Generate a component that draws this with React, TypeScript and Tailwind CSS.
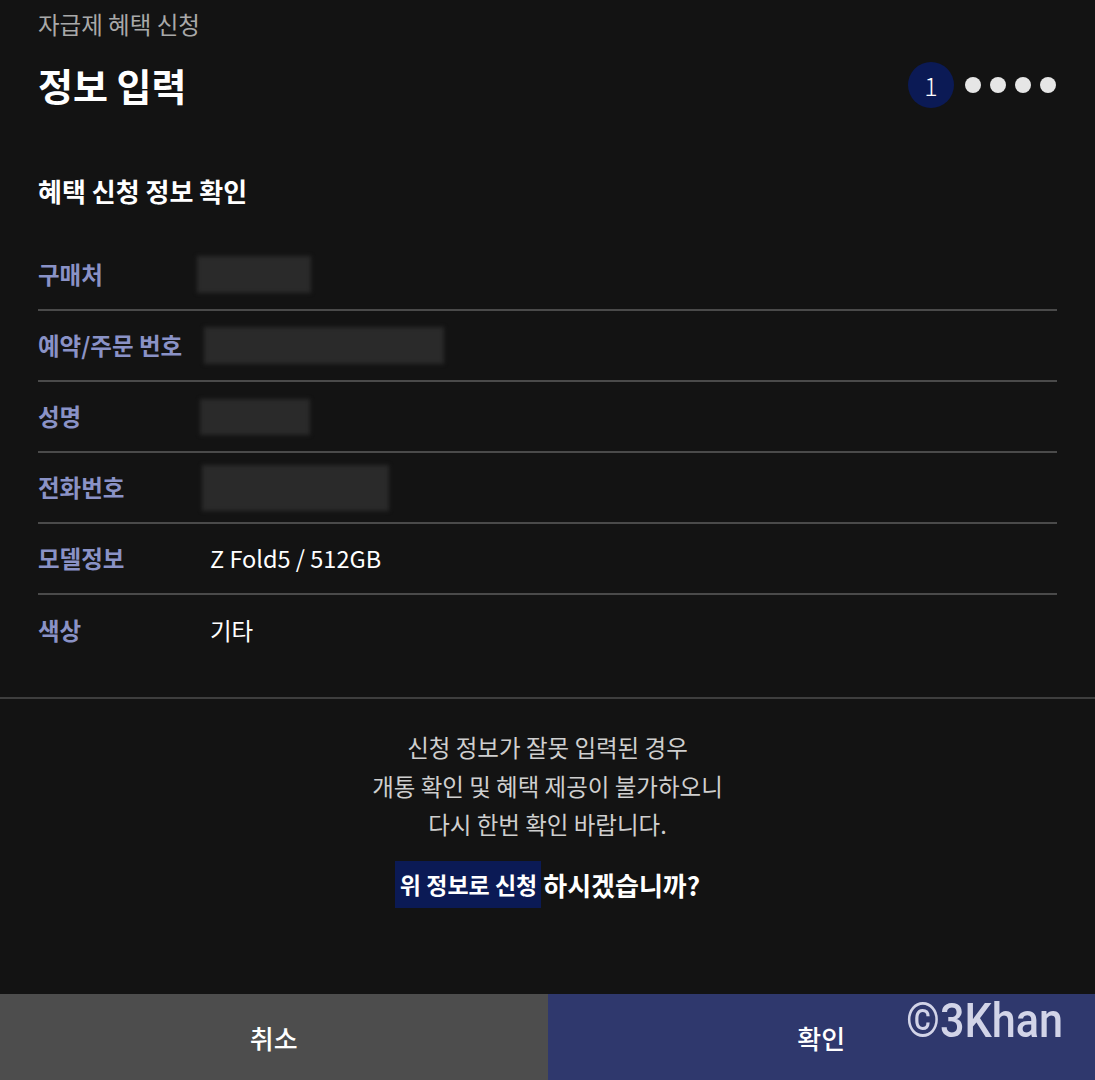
import React from 'react'

type Row = { label: string; value?: string; blur?: { ml: string; w: string; h: string } }

const rows: Row[] = [
  { label: '구매처', blur: { ml: 'ml-[-13px]', w: 'w-[114px]', h: 'h-[37px]' } },
  { label: '예약/주문 번호', blur: { ml: 'ml-[-6px]', w: 'w-[240px]', h: 'h-[37px]' } },
  { label: '성명', blur: { ml: 'ml-[-10px]', w: 'w-[110px]', h: 'h-[36px]' } },
  { label: '전화번호', blur: { ml: 'ml-[-8px]', w: 'w-[187px]', h: 'h-[46px]' } },
  { label: '모델정보', value: 'Z Fold5 / 512GB' },
  { label: '색상', value: '기타' },
]

export default function App() {
  return (
    <div
      className="relative flex h-[1080px] w-full flex-col bg-[#131313] text-white"
      style={{ fontFamily: '"Noto Sans CJK KR", "Noto Sans", Roboto, sans-serif' }}
    >
      <div className="px-[38px] pt-[7px]">
        <div className="text-[23.5px] leading-[34px] text-[#a9a9a9]">자급제 혜택 신청</div>
        <div className="mt-[20px] flex h-[48px] items-center justify-between">
          <h1 className="text-[38px] font-bold leading-[48px]">정보 입력</h1>
          <div className="flex items-center">
            <div className="flex h-[46px] w-[46px] items-center justify-center rounded-full bg-[#0b1a55] text-[25px] font-light leading-none text-white">
              1
            </div>
            <div className="ml-[11px] flex items-center gap-[9px] pr-[1px]">
              <span className="h-[16px] w-[16px] rounded-full bg-[#e6e6e6]" />
              <span className="h-[16px] w-[16px] rounded-full bg-[#e6e6e6]" />
              <span className="h-[16px] w-[16px] rounded-full bg-[#e6e6e6]" />
              <span className="h-[16px] w-[16px] rounded-full bg-[#e6e6e6]" />
            </div>
          </div>
        </div>

        <h2 className="mt-[65px] text-[26px] font-bold leading-[34px]">혜택 신청 정보 확인</h2>

        <div className="mt-[32px] pb-[31px]">
          {rows.map((r, i) => (
            <div
              key={r.label}
              className={
                'flex h-[71px] items-center ' +
                (i < rows.length - 1 ? 'border-b-2 border-[#4a4a4a]' : '')
              }
            >
              <div className="w-[172px] shrink-0 text-[23.5px] font-semibold text-[#8a92c6]">{r.label}</div>
              {r.blur ? (
                <div className={`${r.blur.ml} ${r.blur.w} ${r.blur.h} bg-[#2a2a2a] blur-[2px]`} />
              ) : (
                <div className="text-[23.5px] text-white">{r.value}</div>
              )}
            </div>
          ))}
        </div>
      </div>

      <div className="h-[2px] w-full bg-[#3e3e3e]" />

      <div className="flex flex-col items-center pt-[29px]">
        <p className="text-center text-[23.5px] leading-[38.5px] text-[#cfcfcf]">
          신청 정보가 잘못 입력된 경우
          <br />
          개통 확인 및 혜택 제공이 불가하오니
          <br />
          다시 한번 확인 바랍니다.
        </p>
        <div className="mt-[17px] flex items-center font-bold">
          <span className="flex h-[47px] items-center bg-[#0b1a55] pl-[5px] pr-[4px] text-[23px]">위 정보로 신청</span>
          <span className="pl-[2px] text-[26px]">하시겠습니까?</span>
        </div>
      </div>

      <div className="mt-auto flex h-[86px]">
        <button className="flex flex-1 items-center justify-center bg-[#4d4d4d] text-[26px] font-medium text-white">
          취소
        </button>
        <button className="flex flex-1 items-center justify-center bg-[#2f386d] text-[26px] font-medium text-white">
          확인
        </button>
      </div>

      <div
        className="absolute left-[906px] top-[994px] origin-left scale-x-[0.9] text-[48px] font-medium leading-[54px] text-[#d2d4e8]"
        style={{ fontFamily: 'Roboto, sans-serif' }}
      >
        ©3Khan
      </div>
    </div>
  )
}
